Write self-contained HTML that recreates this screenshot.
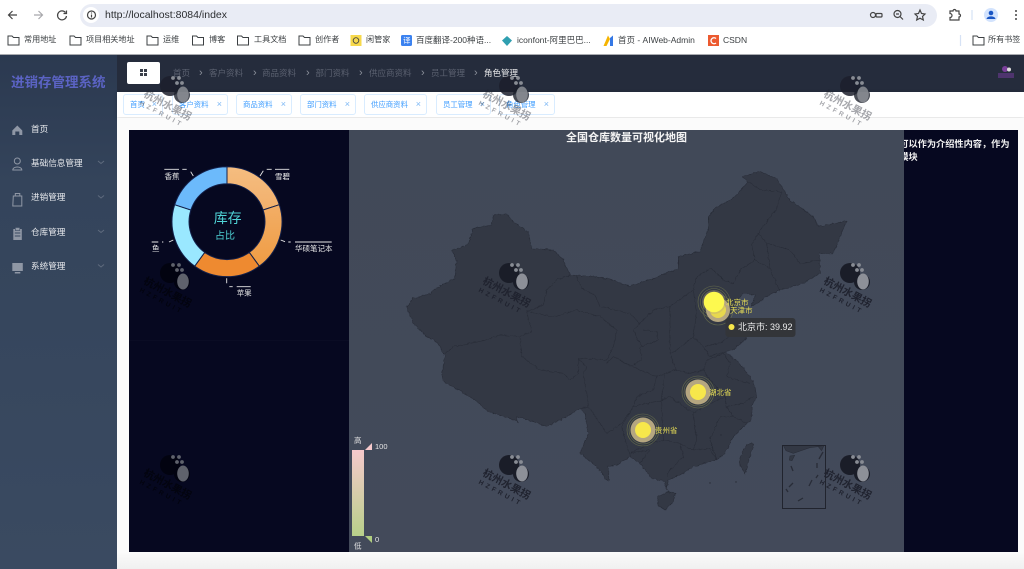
<!DOCTYPE html>
<html lang="zh"><head><meta charset="utf-8"><title>进销存管理系统</title>
<style>
*{box-sizing:border-box}
html,body{margin:0;padding:0;width:1024px;height:569px;overflow:hidden;background:#fff;font-family:"Liberation Sans","Noto Sans CJK SC",sans-serif}
.a{position:absolute;white-space:nowrap;line-height:1}
.bm{font-size:8.5px;color:#3c4043;top:35.500px}
.bf{font-size:8.100px;top:36px}
.bc{font-size:8.500px;color:#5b6170;top:68.500px}
.sep{font-size:11px;color:#8a8f9a;top:67.500px}
.tag{position:absolute;top:94px;height:21px;border:1px solid #d9ecff;border-radius:3px;background:#fff;color:#409eff;font-size:7.400px;line-height:19px;padding-left:6px;white-space:nowrap}
.tag i{position:absolute;right:5px;top:0;font-style:normal;font-size:9px;color:#7db8f5}
.nav{font-size:8.600px;color:#e6e8ec;left:31px}
</style></head><body>
<div class="a" style="left:0;top:0;width:1024px;height:55px;background:#fff;border-bottom:1px solid #a9abb0"></div>
<div class="a" style="left:80px;top:4px;width:857px;height:23px;border-radius:12px;background:#e9ecf5"></div>
<div class="a" style="left:83px;top:7px;width:16px;height:16px;border-radius:8px;background:#fff"></div>
<div class="a" style="left:105px;top:10px;font-size:10.500px;color:#2b2d30">http://localhost:8084/index</div>
<svg class="a" style="left:0;top:0" width="1024" height="55" fill="none" stroke="#444" stroke-width="1.2">
<path d="M17 15H9M12.500 11L8.500 15L12.500 19" stroke="#444"/>
<path d="M34 15H42M38.500 11L42.500 15L38.500 19" stroke="#a8a8ac"/>
<path d="M65.500 12.500A4.500 4.500 0 1 0 66.500 16M66.500 10.500V13.500H63.500"/>
<circle cx="91.500" cy="15" r="4"/><path d="M91.500 14.500V17.500M91.500 12.500V13.500"/>
<circle cx="873" cy="15" r="2.500"/><rect x="876" y="13.500" width="6" height="3.500" rx="1"/>
<circle cx="897.500" cy="14" r="3.500"/><path d="M900 16.500L903 19.500M896 14H899"/>
<path d="M920 10L921.500 13.500L925 14L922.500 16.500L923.300 20L920 18.200L916.700 20L917.500 16.500L915 14L918.500 13.500Z"/>
<path d="M950 11H953A1.500 1.500 0 0 1 956 11H959V14A1.500 1.500 0 0 1 959 17V20H950V17.500A1.500 1.500 0 0 0 950 13.500Z"/>
<path d="M972 10V20" stroke="#d6e2f5"/>
<circle cx="991" cy="15" r="7" fill="#d3e3fd" stroke="none"/>
<circle cx="991" cy="13" r="2.300" fill="#1a56c4" stroke="none"/><path d="M986.500 19C987 15.500 995 15.500 995.500 19Z" fill="#1a56c4" stroke="none"/>
<circle cx="1016" cy="11" r="1" fill="#444" stroke="none"/><circle cx="1016" cy="15" r="1" fill="#444" stroke="none"/><circle cx="1016" cy="19" r="1" fill="#444" stroke="none"/>
<g stroke="#3c4043" stroke-width="1">
<path d="M8 36H12L13.500 37.500H19V45H8Z"/>
<path d="M70 36H74L75.500 37.500H81V45H70Z"/>
<path d="M147 36H151L152.500 37.500H158V45H147Z"/>
<path d="M192.500 36H196.500L198 37.500H203.500V45H192.500Z"/>
<path d="M237.500 36H241.500L243 37.500H248.500V45H237.500Z"/>
<path d="M299 36H303L304.500 37.500H310V45H299Z"/>
<path d="M973 36H977L978.500 37.500H984V45H973Z"/>
</g>
<rect x="350.500" y="35" width="11" height="11" fill="#f7d94c" stroke="none"/><circle cx="356" cy="40.500" r="2.800" stroke="#444" stroke-width=".9"/>
<rect x="401" y="35" width="11" height="11" rx="1.500" fill="#3b82f0" stroke="none"/>
<path d="M502 40.500L507 36L512 40.500L507 46Z" fill="#2f9fb0" stroke="none"/>
<path d="M603.500 46L608 35.500L610 39L606.500 46Z" fill="#f5b400" stroke="none"/><path d="M610 38V46H613V35.500Z" fill="#3578e5" stroke="none"/>
<rect x="708" y="35" width="11" height="11" fill="#ec5a30" stroke="none"/><path d="M716 38.500A3 3 0 1 0 716 43" stroke="#fff" stroke-width="1.300"/>
<path d="M960.500 35V46" stroke="#d6e2f5"/>
</svg>
<span class="a bm bf" style="left:24px">常用地址</span><span class="a bm bf" style="left:86px">项目相关地址</span><span class="a bm bf" style="left:163px">运维</span><span class="a bm bf" style="left:209px">博客</span><span class="a bm bf" style="left:254px">工具文档</span><span class="a bm bf" style="left:315px">创作者</span><span class="a bm bf" style="left:366px">闲管家</span><span class="a bm" style="left:416px">百度翻译-200种语...</span><span class="a bm" style="left:517px">iconfont-阿里巴巴...</span><span class="a bm" style="left:618px">首页 - AIWeb-Admin</span><span class="a bm" style="left:723px">CSDN</span><span class="a bm bf" style="left:988px">所有书签</span>
<span class="a" style="left:403px;top:36.500px;font-size:7.500px;color:#fff">译</span>

<!-- app shell -->
<div class="a" style="left:0;top:55px;width:117px;height:514px;background:linear-gradient(180deg,#2b3950 0,#34445b 25%,#3a4a61 100%)"></div>
<div class="a" style="left:117px;top:55px;width:907px;height:36.500px;background:#252c3c"></div>
<div class="a" style="left:117px;top:91.500px;width:907px;height:25.500px;background:#fff;box-shadow:0 1px 4px rgba(0,0,0,.15)"></div>
<div class="a" style="left:117px;top:118px;width:907px;height:451px;background:#fbfbfb"></div>
<div class="a" style="left:117px;top:553px;width:907px;height:16px;background:linear-gradient(#fafafa,#f0f0f0)"></div>
<div class="a" style="left:11px;top:76px;font-size:13.500px;font-weight:700;color:#5b63c4">进销存管理系统</div>

<svg class="a" style="left:0;top:120px" width="117" height="160" fill="none" stroke="#8f97a5" stroke-width="1">
<g transform="translate(-.700,0)">
<path d="M13 10.500L18 5.500L23 10.500V15H20V11.500H16V15H13Z" fill="#8f97a5" stroke="none"/>
<circle cx="18" cy="41" r="3"/><path d="M13.500 50C13.500 46 22.500 46 22.500 50Z"/>
<path d="M14 76H22.500V86H13.500ZM16 76V73.500H20.500V76"/>
<rect x="14" y="109" width="8.500" height="11" fill="#8f97a5" stroke="none"/><rect x="16" y="107.500" width="4.500" height="3" fill="#8f97a5" stroke="#3a4a61" stroke-width=".6"/><path d="M15.500 113H21M15.500 116H21" stroke="#3a4a61"/>
<rect x="13" y="143" width="10.500" height="8" fill="#8f97a5" stroke="none"/><rect x="15.500" y="152" width="5.500" height="1.500" fill="#8f97a5" stroke="none"/>
</g>
<g stroke="#5f6b7e"><path d="M98 41L101 43.500L104 41"/><path d="M98 75.500L101 78L104 75.500"/><path d="M98 110L101 112.500L104 110"/><path d="M98 144.500L101 147L104 144.500"/></g>
</svg>
<span class="a nav" style="top:125px">首页</span><span class="a nav" style="top:159px">基础信息管理</span><span class="a nav" style="top:193.400px">进销管理</span><span class="a nav" style="top:228px">仓库管理</span><span class="a nav" style="top:262.400px">系统管理</span>

<div class="a" style="left:127px;top:62px;width:33px;height:22px;background:#fff;border-radius:2px"></div>
<svg class="a" style="left:139px;top:68px" width="10" height="10" fill="#3a3f4a"><rect x="1" y="1" width="3" height="3"/><rect x="5" y="1" width="3" height="3"/><rect x="1" y="5" width="3" height="3"/><rect x="5" y="5" width="3" height="3"/></svg>
<span class="a bc" style="left:173px">首页</span><span class="a sep" style="left:199px">›</span><span class="a bc" style="left:209px">客户资料</span><span class="a sep" style="left:253px">›</span><span class="a bc" style="left:262px">商品资料</span><span class="a sep" style="left:306px">›</span><span class="a bc" style="left:315.500px">部门资料</span><span class="a sep" style="left:359px">›</span><span class="a bc" style="left:369px">供应商资料</span><span class="a sep" style="left:421px">›</span><span class="a bc" style="left:431px">员工管理</span><span class="a sep" style="left:474px">›</span><span class="a bc" style="left:484px;color:#e8e8ea">角色管理</span>
<svg class="a" style="left:996px;top:63px" width="22" height="18"><circle cx="9" cy="6" r="3" fill="#7a3f9a"/><circle cx="13" cy="6.500" r="2" fill="#ddd"/><rect x="2" y="10" width="16" height="5" fill="#6a3a90" opacity=".6"/></svg>

<div class="tag" style="left:123px;width:40px">首页<i>×</i></div>
<div class="tag" style="left:172px;width:56px">客户资料<i>×</i></div>
<div class="tag" style="left:236px;width:56px">商品资料<i>×</i></div>
<div class="tag" style="left:300px;width:56px">部门资料<i>×</i></div>
<div class="tag" style="left:364px;width:63px">供应商资料<i>×</i></div>
<div class="tag" style="left:436px;width:55px">员工管理<i>×</i></div>
<div class="tag" style="left:499px;width:56px">角色管理<i>×</i></div>

<!-- chart panels -->
<div class="a" style="left:129px;top:130px;width:889px;height:422px;background:#060820"></div>
<div class="a" style="left:129px;top:340px;width:220px;height:1px;background:#0a0c24"></div>
<div class="a" style="left:349px;top:130px;width:555px;height:422px;background:linear-gradient(180deg,#414958,#434a5a)"></div>
<div class="a" style="left:904px;top:138px;width:114px;height:30px;overflow:hidden;color:#f2f2f2;font-size:9.200px;font-weight:700;line-height:13.300px;white-space:normal"><div style="margin-left:-4.700px;width:118px">可以作为介绍性内容，作为<br>模块</div></div>
<div class="a" style="left:349px;top:133px;width:555px;text-align:center;color:#f4f4f4;font-size:11px;font-weight:700">全国仓库数量可视化地图</div>

<!-- doughnut -->
<svg class="a" style="left:129px;top:130px" width="220" height="180">
<defs>
<linearGradient id="g1" x1="0" y1="0" x2="0" y2="1"><stop offset="0" stop-color="#f5bd80"/><stop offset="1" stop-color="#f2b06c"/></linearGradient>
<linearGradient id="g2" x1="0" y1="0" x2="0" y2="1"><stop offset="0" stop-color="#f2ae66"/><stop offset="1" stop-color="#ef9c44"/></linearGradient>
</defs>
<g transform="translate(98,91.700)" stroke="#13204a" stroke-width="1">
<path d="M0-55A55 55 0 0 1 52.300-17L36.100-11.700A38 38 0 0 0 0-38Z" fill="url(#g1)"/>
<path d="M52.300-17A55 55 0 0 1 32.300 44.500L22.300 30.700A38 38 0 0 0 36.100-11.700Z" fill="url(#g2)"/>
<path d="M32.300 44.500A55 55 0 0 1-32.300 44.500L-22.300 30.700A38 38 0 0 0 22.300 30.700Z" fill="#ee8a30"/>
<path d="M-32.300 44.500A55 55 0 0 1-52.300-17L-36.100-11.700A38 38 0 0 0-22.300 30.700Z" fill="#9ae8ff"/>
<path d="M-52.300-17A55 55 0 0 1 0-55L0-38A38 38 0 0 0-36.100-11.700Z" fill="#6cbafb"/>
</g>
<g stroke="#e8e8e8" fill="none" stroke-width=".9">
<path d="M131 46L134.300 40.700M137.700 39.300H142.700M146 39.300H160.300"/>
<path d="M64.300 46L61.700 41.700M57.700 39.300H53.300M50 39.300H35.300"/>
<path d="M151.700 110L156 111.700M159.300 112H161.700M166 112H202.700"/>
<path d="M97.700 148.300V153.300M100.300 156.700H103.700M107.700 156.700H121.700"/>
<path d="M44.300 110L40 112M34.300 112H33M29.300 112H22.700"/>
</g>
<text x="98.700" y="93" text-anchor="middle" font-size="14" fill="#4fd3d6" font-family="Liberation Sans,Noto Sans CJK SC,sans-serif">库存</text>
<text x="96" y="109" text-anchor="middle" font-size="10" fill="#4fd3d6" font-family="Liberation Sans,Noto Sans CJK SC,sans-serif">占比</text>
<g font-size="7.500" fill="#e8e8e8" font-family="Liberation Sans,Noto Sans CJK SC,sans-serif">
<text x="146" y="49">雪碧</text><text x="35.500" y="49">香蕉</text><text x="166" y="121">华硕笔记本</text><text x="107.700" y="165.500">苹果</text><text x="23" y="121">鱼</text></g>
</svg>

<!-- map -->
<svg class="a" style="left:349px;top:130px" width="555" height="422" viewBox="349 130 555 422">
<defs><filter id="wob" filterUnits="userSpaceOnUse" x="349" y="130" width="555" height="422" color-interpolation-filters="sRGB"><feTurbulence type="fractalNoise" baseFrequency=".28" numOctaves="2" seed="4"/><feDisplacementMap in="SourceGraphic" scale="3" xChannelSelector="R" yChannelSelector="G"/></filter></defs>
<g filter="url(#wob)">
<g transform="translate(400,200) scale(.3333)" stroke-linejoin="round">
<path fill="#333844" stroke="#282c37" stroke-width="1.600" d="M20 320L40 295L60 290L90 280L115 260L165 235L170 180L155 150L205 135L220 85L275 75L280 45L320 42L340 65L385 95L395 145L460 150L490 180L510 225L560 228L620 235L690 258L760 235L835 205L835 170L900 155L925 85L925 50L945 25L1000 -5L1045 -55L1025 -70L1080 -85L1130 -65L1170 0L1240 50L1255 80L1340 63L1320 110L1300 160L1260 160L1260 220L1210 250L1140 270L1100 290L1055 320L1065 285L1030 280L1005 310L990 345L995 380L1040 415L1000 450L975 455L1020 490L1060 545L1070 590L1055 620L1055 660L1030 680L1000 710L975 760L950 780L880 800L840 825L805 840L800 870L795 845L755 835L720 790L690 770L650 795L625 800L625 845L590 800L540 760L565 700L555 640L540 625L500 650L440 680L385 660L350 650L355 670L345 660L265 635L225 600L175 570L130 545L125 520L135 470L115 430L75 405L40 370Z"/>
<path fill="none" stroke="#282c37" stroke-width="1.600" d="M130 465L160 440L210 430L260 420L300 405L360 410L395 395L380 335L430 315L440 270L470 240L510 225M360 410L365 470L420 510L490 520L510 540L535 520L535 475L560 500L550 520L565 620L540 625M380 335L460 350L530 330L600 350L650 390L640 440L620 480L535 475M528 225L545 265L585 285L600 320L650 330L690 340L720 370L760 330L810 320L880 270L890 230L935 205L970 240L1000 250L1020 210L1065 180L1055 135L1075 100L1130 25L1145 -25L1080 -30L1045 -55M810 320L810 460L830 510L795 520L770 530M720 370L700 390L725 440L775 420L770 395L730 390M720 440L725 480L690 500L660 480L640 470L620 490M660 480L720 510L770 530L760 570L710 590L700 620L740 610L790 600L785 600L795 520M810 320L880 270L890 340L880 410L830 450L810 460M880 410L910 440L960 430L1000 400M830 510L870 520L910 510L920 480L970 460L975 455M910 440L930 470L975 455M970 460L990 490L980 530L1010 540L1050 550M920 480L910 510L930 540L975 590L980 620L1030 610L1060 590M785 600L810 590L880 640L930 610L975 590M880 640L890 720L880 750L840 730L790 720L785 600M980 620L1000 650L960 650L930 720L950 780M1000 650L1040 670M880 750L930 745L950 780M840 730L850 770L810 810L800 830M720 790L750 750L690 760M700 620L665 680L690 770M790 720L750 730L690 760M565 620L580 640L620 700L665 670L700 620M1075 100L1100 130L1170 150L1200 190L1260 180M1065 180L1110 205L1140 275M1100 130L1110 205"/>
</g>
<g transform="translate(570,400) scale(.3333)" fill="#333844" stroke="#282c37" stroke-width="1.600">
<path d="M545 127L525 140L510 175L510 195L525 222L540 170L550 140Z"/>
<path d="M295 275L265 290L262 315L285 330L310 305L315 280Z"/>
</g>
</g>
<g transform="translate(570,400) scale(.3333)" fill="#333844" stroke="#282c37" stroke-width="1.600">
<path d="M640 136L767 136L745 140L720 143L670 160L648 152Z"/>
<path d="M745 140L755 152L762 136Z"/>
<path d="M660 168L674 166L666 182L658 180Z"/>
</g>
<rect x="782.500" y="445.500" width="43" height="63" fill="none" stroke="#21242e" stroke-width="1"/>
<g stroke="#282c37" stroke-width="1.300" fill="none"><path d="M791 466L793 471M793 483L789 487M786 489L788 492M798 501L803 498M809 486L812 480M816 478L818 475M817 468V463M819 459L823 452"/></g>
<g fill="#282c37"><circle cx="710" cy="438" r=".7"/><circle cx="721" cy="435" r=".7"/><circle cx="736" cy="482" r=".7"/><circle cx="716" cy="459" r=".7"/><circle cx="710" cy="483" r=".7"/></g>

<g fill="none" stroke="#7a8150" stroke-width=".6" opacity=".7">
<circle cx="714" cy="302" r="13.500"/><circle cx="714" cy="302" r="16"/>
<circle cx="718" cy="310" r="15"/>
<circle cx="698" cy="392" r="14"/><circle cx="698" cy="392" r="16"/>
<circle cx="643" cy="430" r="14"/><circle cx="643" cy="430" r="16"/>
</g>
<circle cx="718" cy="310" r="12" fill="#b5a680"/><circle cx="718" cy="310" r="8" fill="#e8d84e"/>
<circle cx="714" cy="302" r="12" fill="#b5a680" opacity=".35"/><circle cx="714" cy="302" r="10.300" fill="#fdf94f"/>
<circle cx="698" cy="392" r="12.500" fill="#b5a680"/><circle cx="698" cy="392" r="8" fill="#f7e74b"/>
<circle cx="643" cy="430" r="12.500" fill="#b5a680"/><circle cx="643" cy="430" r="8" fill="#f7e74b"/>
<g font-size="7.500" fill="#e9df56" font-family="Liberation Sans,Noto Sans CJK SC,sans-serif">
<text x="726" y="305">北京市</text><text x="730" y="313">天津市</text><text x="709" y="395">湖北省</text><text x="655" y="433">贵州省</text></g>
<rect x="725.500" y="318" width="70" height="19" rx="3" fill="#333539"/>
<circle cx="731.500" cy="327" r="3" fill="#f7e74b"/>
<text x="738" y="330" font-size="9" fill="#eee" font-family="Liberation Sans,Noto Sans CJK SC,sans-serif">北京市: 39.92</text>
<defs><linearGradient id="vm" x1="0" y1="0" x2="0" y2="1"><stop offset="0" stop-color="#f6c9cc"/><stop offset="1" stop-color="#b8d08a"/></linearGradient></defs>
<rect x="352" y="450" width="12" height="86" fill="url(#vm)"/>
<path d="M365 450L372 443V450Z" fill="#f6c9cc"/><path d="M365 536H372V543Z" fill="#b0ce80"/>
<g font-size="7.500" fill="#e6e6e6" font-family="Liberation Sans,Noto Sans CJK SC,sans-serif"><text x="354" y="443">高</text><text x="354" y="548.500">低</text><text x="375" y="449">100</text><text x="375" y="542">0</text></g>
</svg>

<!-- watermarks -->
<svg class="a" style="left:0;top:0" width="1024" height="569" font-family="Liberation Sans,Noto Sans CJK SC,sans-serif">
<g transform="translate(170,86)"><circle r="10" fill="#1c1f2b" opacity=".85"/><circle cx="12" cy="9" r="8" fill="#1c1f2b" opacity=".8"/><ellipse cx="13" cy="8.500" rx="5.800" ry="8" fill="#8d9098" opacity=".85"/><circle cx="3" cy="-8" r="1.900" fill="#888c94"/><circle cx="9" cy="-8" r="1.900" fill="#888c94"/><circle cx="7" cy="-3" r="1.900" fill="#888c94"/><circle cx="12" cy="-3" r="1.900" fill="#888c94"/><text transform="translate(-4,22.400) rotate(28)" text-anchor="middle" font-size="10.500" font-weight="700" fill="#20232f" opacity=".4">杭州水果拐</text><text transform="translate(-9.300,29.800) rotate(28)" text-anchor="middle" font-size="6.500" letter-spacing="3" font-weight="700" fill="#20232f" opacity=".4">HZFRUIT</text></g>
<g transform="translate(509,86)"><circle r="10" fill="#1c1f2b" opacity=".85"/><circle cx="12" cy="9" r="8" fill="#1c1f2b" opacity=".8"/><ellipse cx="13" cy="8.500" rx="5.800" ry="8" fill="#8d9098" opacity=".85"/><circle cx="3" cy="-8" r="1.900" fill="#888c94"/><circle cx="9" cy="-8" r="1.900" fill="#888c94"/><circle cx="7" cy="-3" r="1.900" fill="#888c94"/><circle cx="12" cy="-3" r="1.900" fill="#888c94"/><text transform="translate(-4,22.400) rotate(28)" text-anchor="middle" font-size="10.500" font-weight="700" fill="#20232f" opacity=".4">杭州水果拐</text><text transform="translate(-9.300,29.800) rotate(28)" text-anchor="middle" font-size="6.500" letter-spacing="3" font-weight="700" fill="#20232f" opacity=".4">HZFRUIT</text></g>
<g transform="translate(850,86)"><circle r="10" fill="#1c1f2b" opacity=".85"/><circle cx="12" cy="9" r="8" fill="#1c1f2b" opacity=".8"/><ellipse cx="13" cy="8.500" rx="5.800" ry="8" fill="#8d9098" opacity=".85"/><circle cx="3" cy="-8" r="1.900" fill="#888c94"/><circle cx="9" cy="-8" r="1.900" fill="#888c94"/><circle cx="7" cy="-3" r="1.900" fill="#888c94"/><circle cx="12" cy="-3" r="1.900" fill="#888c94"/><text transform="translate(-4,22.400) rotate(28)" text-anchor="middle" font-size="10.500" font-weight="700" fill="#20232f" opacity=".4">杭州水果拐</text><text transform="translate(-9.300,29.800) rotate(28)" text-anchor="middle" font-size="6.500" letter-spacing="3" font-weight="700" fill="#20232f" opacity=".4">HZFRUIT</text></g>
<g transform="translate(170,273)"><circle r="10" fill="#020310"/><circle cx="12" cy="9" r="8" fill="#020310"/><ellipse cx="13" cy="8.500" rx="5.800" ry="8" fill="#5f626c"/><circle cx="3" cy="-8" r="1.900" fill="#5f626c"/><circle cx="9" cy="-8" r="1.900" fill="#5f626c"/><circle cx="7" cy="-3" r="1.900" fill="#5f626c"/><circle cx="12" cy="-3" r="1.900" fill="#5f626c"/><text transform="translate(-4,22.400) rotate(28)" text-anchor="middle" font-size="10.500" font-weight="700" fill="#03040f">杭州水果拐</text><text transform="translate(-9.300,29.800) rotate(28)" text-anchor="middle" font-size="6.500" letter-spacing="3" font-weight="700" fill="#03040f">HZFRUIT</text></g>
<g transform="translate(509,273)"><circle r="10" fill="#1a1d28"/><circle cx="12" cy="9" r="8" fill="#1a1d28"/><ellipse cx="13" cy="8.500" rx="5.800" ry="8" fill="#8d9098"/><circle cx="3" cy="-8" r="1.900" fill="#888c94"/><circle cx="9" cy="-8" r="1.900" fill="#888c94"/><circle cx="7" cy="-3" r="1.900" fill="#888c94"/><circle cx="12" cy="-3" r="1.900" fill="#888c94"/><text transform="translate(-4,22.400) rotate(28)" text-anchor="middle" font-size="10.500" font-weight="700" fill="#20232f">杭州水果拐</text><text transform="translate(-9.300,29.800) rotate(28)" text-anchor="middle" font-size="6.500" letter-spacing="3" font-weight="700" fill="#20232f">HZFRUIT</text></g>
<g transform="translate(850,273)"><circle r="10" fill="#1a1d28"/><circle cx="12" cy="9" r="8" fill="#1a1d28"/><ellipse cx="13" cy="8.500" rx="5.800" ry="8" fill="#8d9098"/><circle cx="3" cy="-8" r="1.900" fill="#888c94"/><circle cx="9" cy="-8" r="1.900" fill="#888c94"/><circle cx="7" cy="-3" r="1.900" fill="#888c94"/><circle cx="12" cy="-3" r="1.900" fill="#888c94"/><text transform="translate(-4,22.400) rotate(28)" text-anchor="middle" font-size="10.500" font-weight="700" fill="#20232f">杭州水果拐</text><text transform="translate(-9.300,29.800) rotate(28)" text-anchor="middle" font-size="6.500" letter-spacing="3" font-weight="700" fill="#20232f">HZFRUIT</text></g>
<g transform="translate(170,465)"><circle r="10" fill="#020310"/><circle cx="12" cy="9" r="8" fill="#020310"/><ellipse cx="13" cy="8.500" rx="5.800" ry="8" fill="#5f626c"/><circle cx="3" cy="-8" r="1.900" fill="#5f626c"/><circle cx="9" cy="-8" r="1.900" fill="#5f626c"/><circle cx="7" cy="-3" r="1.900" fill="#5f626c"/><circle cx="12" cy="-3" r="1.900" fill="#5f626c"/><text transform="translate(-4,22.400) rotate(28)" text-anchor="middle" font-size="10.500" font-weight="700" fill="#03040f">杭州水果拐</text><text transform="translate(-9.300,29.800) rotate(28)" text-anchor="middle" font-size="6.500" letter-spacing="3" font-weight="700" fill="#03040f">HZFRUIT</text></g>
<g transform="translate(509,465)"><circle r="10" fill="#1a1d28"/><circle cx="12" cy="9" r="8" fill="#1a1d28"/><ellipse cx="13" cy="8.500" rx="5.800" ry="8" fill="#8d9098"/><circle cx="3" cy="-8" r="1.900" fill="#888c94"/><circle cx="9" cy="-8" r="1.900" fill="#888c94"/><circle cx="7" cy="-3" r="1.900" fill="#888c94"/><circle cx="12" cy="-3" r="1.900" fill="#888c94"/><text transform="translate(-4,22.400) rotate(28)" text-anchor="middle" font-size="10.500" font-weight="700" fill="#20232f">杭州水果拐</text><text transform="translate(-9.300,29.800) rotate(28)" text-anchor="middle" font-size="6.500" letter-spacing="3" font-weight="700" fill="#20232f">HZFRUIT</text></g>
<g transform="translate(850,465)"><circle r="10" fill="#1a1d28"/><circle cx="12" cy="9" r="8" fill="#1a1d28"/><ellipse cx="13" cy="8.500" rx="5.800" ry="8" fill="#8d9098"/><circle cx="3" cy="-8" r="1.900" fill="#888c94"/><circle cx="9" cy="-8" r="1.900" fill="#888c94"/><circle cx="7" cy="-3" r="1.900" fill="#888c94"/><circle cx="12" cy="-3" r="1.900" fill="#888c94"/><text transform="translate(-4,22.400) rotate(28)" text-anchor="middle" font-size="10.500" font-weight="700" fill="#20232f">杭州水果拐</text><text transform="translate(-9.300,29.800) rotate(28)" text-anchor="middle" font-size="6.500" letter-spacing="3" font-weight="700" fill="#20232f">HZFRUIT</text></g>
</svg>
</body></html>
